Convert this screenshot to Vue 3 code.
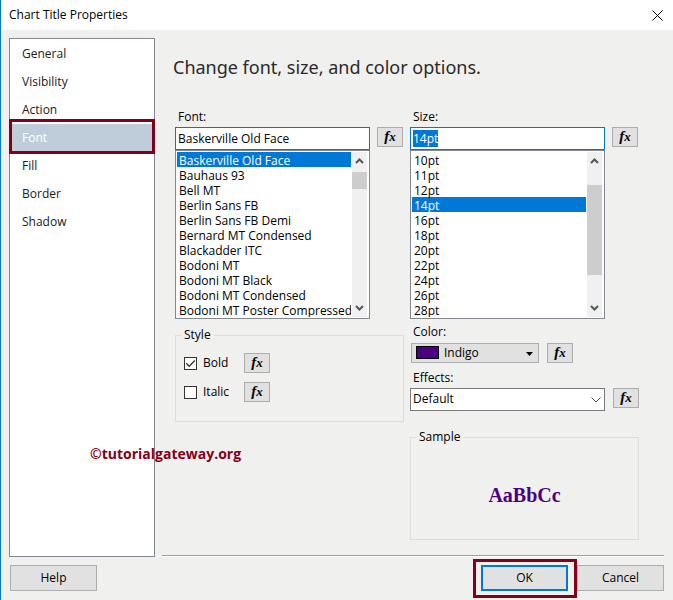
<script setup>
import { ref, onMounted } from 'vue'

const sections = ['General', 'Visibility', 'Action', 'Font', 'Fill', 'Border', 'Shadow']
const fonts = [
  'Baskerville Old Face', 'Bauhaus 93', 'Bell MT', 'Berlin Sans FB', 'Berlin Sans FB Demi',
  'Bernard MT Condensed', 'Blackadder ITC', 'Bodoni MT', 'Bodoni MT Black',
  'Bodoni MT Condensed', 'Bodoni MT Poster Compressed',
]
const sizes = ['10pt', '11pt', '12pt', '14pt', '16pt', '18pt', '20pt', '22pt', '24pt', '26pt', '28pt']

const section = ref('Font')
const font = ref('Baskerville Old Face')
const size = ref('14pt')
const color = ref('Indigo')
const effect = ref('Default')
const bold = ref(true)
const italic = ref(false)
const sizeInput = ref(null)

onMounted(() => {
  sizeInput.value.focus({ preventScroll: true })
  sizeInput.value.select()
})
</script>

<template>
  <div class="dialog">
    <header class="titlebar">
      <span>Chart Title Properties</span>
      <button class="close" type="button" aria-label="Close">
        <svg width="11" height="11" viewBox="0 0 11 11"><path d="M0.5 0.5L10.5 10.5M10.5 0.5L0.5 10.5" /></svg>
      </button>
    </header>

    <div class="body">
      <nav class="sidebar">
        <a
          v-for="s in sections"
          :key="s"
          href="#"
          :class="{ active: s === section }"
          @click.prevent="section = s"
        >{{ s }}</a>
      </nav>

      <main class="page">
        <h1>Change font, size, and color options.</h1>
        <div class="columns">
          <div class="column">
            <label class="label" for="font">Font:</label>
            <div class="row combo-row">
              <div class="combo">
                <input id="font" v-model="font" class="field" type="text">
                <div class="listbox">
                  <select v-model="font" size="11" aria-label="Fonts">
                    <option v-for="f in fonts" :key="f">{{ f }}</option>
                  </select>
                  <div class="scrollbar font-scroll">
                    <svg width="9" height="6" viewBox="0 0 9 6"><path d="M1 5L4.5 1.5L8 5" /></svg>
                    <span class="thumb"></span>
                    <svg class="down" width="9" height="6" viewBox="0 0 9 6"><path d="M1 1L4.5 4.5L8 1" /></svg>
                  </div>
                </div>
              </div>
              <button class="fx" type="button"><i>f</i><i class="x">x</i></button>
            </div>

            <fieldset class="style-group">
              <legend>Style</legend>
              <div class="check">
                <label><input v-model="bold" type="checkbox">Bold</label>
                <button class="fx" type="button"><i>f</i><i class="x">x</i></button>
              </div>
              <div class="check">
                <label><input v-model="italic" type="checkbox">Italic</label>
                <button class="fx" type="button"><i>f</i><i class="x">x</i></button>
              </div>
            </fieldset>
          </div>

          <div class="column">
            <label class="label" for="size">Size:</label>
            <div class="row combo-row">
              <div class="combo">
                <input id="size" ref="sizeInput" v-model="size" class="field" type="text">
                <div class="listbox">
                  <select v-model="size" size="11" aria-label="Sizes">
                    <option v-for="s in sizes" :key="s">{{ s }}</option>
                  </select>
                  <div class="scrollbar size-scroll">
                    <svg width="9" height="6" viewBox="0 0 9 6"><path d="M1 5L4.5 1.5L8 5" /></svg>
                    <span class="thumb"></span>
                    <svg class="down" width="9" height="6" viewBox="0 0 9 6"><path d="M1 1L4.5 4.5L8 1" /></svg>
                  </div>
                </div>
              </div>
              <button class="fx" type="button"><i>f</i><i class="x">x</i></button>
            </div>

            <label class="label color-label" for="color">Color:</label>
            <div class="row color-row">
              <div class="color-picker">
                <select id="color" v-model="color"><option>Indigo</option></select>
                <span class="swatch"></span>
                <svg width="7" height="4" viewBox="0 0 7 4"><path d="M0 0H7L3.5 4Z" /></svg>
              </div>
              <button class="fx" type="button"><i>f</i><i class="x">x</i></button>
            </div>

            <label class="label effects-label" for="effects">Effects:</label>
            <div class="row">
              <div class="effects">
                <select id="effects" v-model="effect"><option>Default</option></select>
                <svg width="10" height="6" viewBox="0 0 10 6"><path d="M0.5 0.5L5 5L9.5 0.5" /></svg>
              </div>
              <button class="fx" type="button"><i>f</i><i class="x">x</i></button>
            </div>

            <fieldset class="sample-group">
              <legend>Sample</legend>
              <div class="sample">AaBbCc</div>
            </fieldset>
          </div>
        </div>
      </main>
    </div>

    <footer class="footer">
      <button class="btn" type="button">Help</button>
      <button class="btn ok" type="button">OK</button>
      <button class="btn" type="button">Cancel</button>
    </footer>

    <div class="watermark">©tutorialgateway.org</div>
  </div>
</template>

<style>
body {
  margin: 0;
  background: #f0f0ee;
}
</style>

<style scoped>
.dialog {
  position: relative;
  box-sizing: border-box;
  display: flex;
  flex-direction: column;
  min-height: 100vh;
  border-left: 1px solid #0078d7;
  background: #f0f0ee;
  color: #000;
  font: 12px/16px "Open Sans", sans-serif;
}
.dialog *, .dialog *::after {
  box-sizing: border-box;
}
button, input, select {
  margin: 0;
  padding: 0;
  border-radius: 0;
  font: inherit;
  color: inherit;
  outline: none;
}
svg {
  fill: none;
  stroke: #555;
  stroke-width: 2;
}
.titlebar {
  display: flex;
  align-items: center;
  justify-content: space-between;
  height: 30px;
  padding: 0 10px 0 8px;
  background: #fff;
}
.close {
  display: flex;
  border: 0;
  background: none;
}
.close svg {
  stroke: #000;
  stroke-width: 1;
}
.body {
  flex: 1;
  display: flex;
  gap: 7px;
  padding: 8px 9px 0 8px;
}
.sidebar {
  width: 146px;
  padding: 1px;
  border: 1px solid #828790;
  background: #fff;
}
.sidebar a {
  position: relative;
  display: block;
  padding: 6px 11px;
  color: #1a1a1a;
  text-decoration: none;
}
.sidebar .active {
  background: #bfcddb;
  color: #fff;
}
.sidebar .active::after {
  content: "";
  position: absolute;
  inset: -5px -2px -2px;
  border: 3px solid #840018;
}
.page {
  flex: 1;
  padding: 17px 25px 0 13px;
  margin-bottom: 1px;
  border-bottom: 1px solid #a0a0a0;
  box-shadow: 0 1px #fff;
}
h1 {
  margin: 0 -2px;
  font-family: "Noto Sans", sans-serif;
  font-size: 18px;
  line-height: 24px;
  font-weight: 400;
  color: #2a2a2a;
}
.columns {
  display: grid;
  grid-template-columns: 1fr 1fr;
  gap: 6px;
  margin-top: 30px;
}
.column {
  display: flex;
  flex-direction: column;
  min-width: 0;
}
.label {
  padding-left: 3px;
  margin-bottom: 2px;
}
.row {
  display: flex;
  gap: 8px;
  align-items: flex-start;
}
.combo-row {
  gap: 7px;
  padding-right: 1px;
}
.combo {
  flex: 1;
  min-width: 0;
}
.field {
  display: block;
  width: 100%;
  height: 23px;
  padding: 0 2px 1px;
  border: 1px solid #0078d7;
  background: #fff;
}
.field::selection {
  background: #0078d7;
  color: #fff;
}
.listbox {
  display: flex;
  padding: 1px 2px 1px 1px;
  border: 1px solid #828790;
  background: #fff;
}
.listbox select {
  flex: 1;
  min-width: 0;
  height: 165px;
  border: 0;
  background: #fff;
  overflow: hidden;
}
.listbox option {
  height: 15px;
  min-height: 15px;
  padding: 0 2px;
  line-height: 13px;
}
.listbox option:checked {
  background: linear-gradient(#0078d7, #0078d7);
  -webkit-text-fill-color: #fff;
}
.scrollbar {
  display: flex;
  flex-direction: column;
  align-items: center;
  width: 15px;
  margin-left: 1px;
  padding: 6px 0;
  background: #f0f0f0;
}
.thumb {
  width: 15px;
  height: 17px;
  margin-top: 8px;
  background: #cdcdcd;
}
.size-scroll .thumb {
  height: 90px;
  margin-top: 21px;
}
.down {
  margin-top: auto;
}
.fx {
  flex: none;
  display: flex;
  align-items: baseline;
  justify-content: center;
  width: 26px;
  height: 20px;
  border: 1px solid #adadad;
  background: #e1e1e1;
  font: bold 15px/16px "Liberation Serif", serif;
}
.fx .x {
  font-size: 13px;
}
fieldset {
  min-width: 0;
  margin: 0;
  border: 1px solid #dcdcdc;
}
legend {
  padding: 0 3px;
}
.style-group {
  display: flex;
  flex-direction: column;
  gap: 9px;
  height: 95px;
  margin-top: 8px;
  padding: 10px 8px 0 5px;
}
.check {
  display: flex;
  padding-left: 3px;
}
.check label {
  display: flex;
  align-items: center;
  gap: 6px;
  width: 60px;
}
.check input {
  appearance: none;
  width: 13px;
  height: 13px;
  border: 1px solid #333;
  background: #fff;
}
.check input:checked {
  background: #fff url("data:image/svg+xml,%3Csvg xmlns='http://www.w3.org/2000/svg' viewBox='0 0 11 11'%3E%3Cpath d='M1.2 5.3L4.2 8.3L9.8 2.5' fill='none' stroke='%23333' stroke-width='1.3'/%3E%3C/svg%3E");
}
.color-label {
  margin-top: 5px;
}
.color-row {
  padding: 1px 0 0 1px;
}
.color-picker, .effects {
  position: relative;
}
.color-picker {
  width: 128px;
}
.color-picker select {
  appearance: none;
  display: block;
  width: 100%;
  height: 20px;
  padding-left: 32px;
  border: 1px solid #adadad;
  background: #e1e1e1;
}
.swatch {
  position: absolute;
  left: 5px;
  top: 3px;
  width: 23px;
  height: 13px;
  border: 1px solid #000;
  background: #4b0082;
  pointer-events: none;
}
.color-picker svg {
  position: absolute;
  right: 6px;
  top: 9px;
  fill: #000;
  stroke: none;
  pointer-events: none;
}
.effects-label {
  margin-top: 7px;
}
.effects {
  flex: 1;
}
.effects select {
  appearance: none;
  display: block;
  width: 100%;
  height: 23px;
  padding: 0 2px 1px;
  border: 1px solid #7a7a7a;
  background: #fff;
}
.effects svg {
  position: absolute;
  right: 4px;
  top: 9px;
  stroke-width: 1;
  pointer-events: none;
}
.sample-group {
  height: 111px;
  margin-top: 18px;
  padding: 0 5px;
}
.sample {
  padding-top: 38px;
  color: #4b0082;
  font: bold 20px/24px "Liberation Serif", serif;
  text-align: center;
}
.footer {
  display: flex;
  gap: 9px;
  padding: 8px 9px 9px;
}
.btn {
  width: 87px;
  height: 26px;
  border: 1px solid #adadad;
  background: #e1e1e1;
}
.ok {
  position: relative;
  margin-left: auto;
  border: 2px solid #0078d7;
}
.ok::after {
  content: "";
  position: absolute;
  inset: -8px -11px -9px -10px;
  border: 3px solid #840018;
}
.watermark {
  position: absolute;
  left: 89px;
  top: 444px;
  color: #840018;
  font: bold 14px/20px "Open Sans", sans-serif;
  pointer-events: none;
}
</style>
